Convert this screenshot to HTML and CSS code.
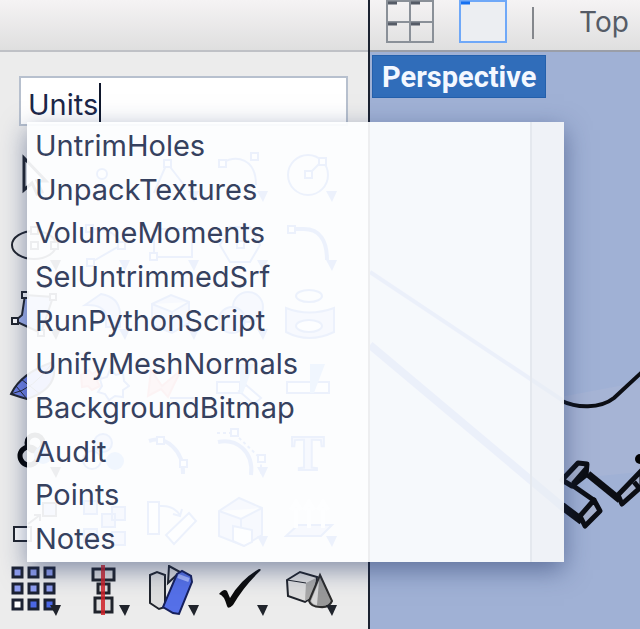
FILE: index.html
```
<!DOCTYPE html>
<html lang="en">
<head>
    <meta charset="UTF-8">
    <title>Perspective</title>
    <link rel="stylesheet" href="styles.css">
</head>
<body>
<div class="app">

<aside class="panel">
    <div class="titlebar"></div>
    <div class="command">
        <input class="command-input" type="text" value="Units" aria-label="Command" autocomplete="off">
        <span class="caret"></span>
        <div class="popup">
            <ul class="suggestions">
                <li><button type="button">UntrimHoles</button></li>
                <li><button type="button">UnpackTextures</button></li>
                <li><button type="button">VolumeMoments</button></li>
                <li><button type="button">SelUntrimmedSrf</button></li>
                <li><button type="button">RunPythonScript</button></li>
                <li><button type="button">UnifyMeshNormals</button></li>
                <li><button type="button">BackgroundBitmap</button></li>
                <li><button type="button">Audit</button></li>
                <li><button type="button">Points</button></li>
                <li><button type="button">Notes</button></li>
            </ul>
            <div class="scroll-track"></div>
        </div>
    </div>

    <div class="tools">
        <!-- select, point, curves -->
        <button type="button" aria-label="Select"><svg viewBox="0 0 53 53"><path class="w heavy" d="M16 7V39L24 32L29 43L34 41L29 30H38Z"/></svg></button>
        <button type="button" aria-label="Point"><svg viewBox="0 0 53 53"><circle class="w" cx="25" cy="23" r="5"/></svg></button>
        <button type="button" aria-label="Polyline"><svg viewBox="0 0 53 53"><path class="l" d="M8 42L21 12L38 34"/><path class="w" d="M18 9h7v7h-7z"/><path class="m" d="M42 40h11l-5 11z"/></svg></button>
        <button type="button" aria-label="Curve"><svg viewBox="0 0 53 53"><path class="l" d="M7 12C22 3 41 8 41 34"/><path class="w" d="M4 9h7v7H4zM36 2h7v7h-7z"/><path class="m" d="M42 40h11l-5 11z"/></svg></button>
        <button type="button" aria-label="Circle"><svg viewBox="0 0 53 53"><circle class="l" cx="24" cy="24" r="20"/><path class="l" d="M25 23L38 10"/><path class="w" d="M21 20h7v7h-7zM35 7h7v7h-7z"/><path class="m" d="M42 40h11l-5 11z"/></svg></button>

        <button type="button" aria-label="Ellipse"><svg viewBox="0 0 53 53"><ellipse class="l" cx="26" cy="25" rx="22" ry="14"/><path class="w" d="M23 22h7v7h-7zM43 22h7v7h-7zM23 7h7v7h-7z"/><path class="m" d="M42 40h11l-5 11z"/></svg></button>
        <button type="button" aria-label="Arc"><svg viewBox="0 0 53 53"><path class="l" d="M12 10C29 6 40 14 44 25L13 43"/><path class="w" d="M9 5h7v7H9zM41 22h7v7h-7zM10 39h7v7h-7z"/><path class="m" d="M42 40h11l-5 11z"/></svg></button>
        <button type="button" aria-label="Rectangle"><svg viewBox="0 0 53 53"><path class="l" d="M8 9H46V37H8z"/><path class="w" d="M4 33h7v7H4z"/><path class="m" d="M42 40h11l-5 11z"/></svg></button>
        <button type="button" aria-label="Polygon"><svg viewBox="0 0 53 53"><path class="l" d="M15 7H35L45 25L35 42H15L5 25Z"/><path class="w" d="M22 21h7v7h-7z"/><path class="m" d="M42 40h11l-5 11z"/></svg></button>
        <button type="button" aria-label="Fillet"><svg viewBox="0 0 53 53"><path class="l thick" d="M9 9H20C36 9 43 21 43 40"/><path class="w" d="M4 6h7v7H4z"/><path class="m" d="M42 40h11l-5 11z"/></svg></button>

        <!-- surfaces and solids -->
        <button type="button" aria-label="Surface"><svg viewBox="0 0 53 53"><path class="b" d="M17 6L45 8L33 44L7 32L14 26Z"/><path class="w" d="M14 3h6v6h-6zM4 29h6v6H4zM42 5h6v6h-6zM30 41h6v6h-6z"/><path class="m" d="M42 40h11l-5 11z"/></svg></button>
        <button type="button" aria-label="Loft"><svg viewBox="0 0 53 53"><path class="b" d="M8 16L24 5Q42 8 43 24V38H29V26Q26 15 8 16Z"/><path class="m" d="M42 40h11l-5 11z"/></svg></button>
        <button type="button" aria-label="Box"><svg viewBox="0 0 53 53"><path class="b" d="M6 15L25 6L43 13V34L26 44L6 36ZM6 15L26 23L43 13M26 23V44"/><path class="m" d="M42 40h11l-5 11z"/></svg></button>
        <button type="button" aria-label="Sphere"><svg viewBox="0 0 53 53"><circle class="b" cx="33" cy="18" r="15"/><circle class="b" cx="17" cy="31" r="13"/><path class="m" d="M42 40h11l-5 11z"/></svg></button>
        <button type="button" aria-label="Extract surface"><svg viewBox="0 0 53 53"><ellipse class="l" cx="25" cy="7" rx="13" ry="6"/><path class="b" d="M2 19Q25 28 50 19V43Q25 55 2 43Z"/><ellipse class="w" cx="25" cy="37" rx="13" ry="6"/></svg></button>

        <!-- mesh, boolean, trim -->
        <button type="button" aria-label="Mesh"><svg viewBox="0 0 53 53"><path class="mesh" d="M3 36Q13 15 45 4Q52 30 19 41Q12 39 3 36Z"/><path class="l thin" d="M3 36Q25 32 45 4M8 28L19 41M13 21L32 36"/></svg></button>
        <button type="button" aria-label="Explode"><svg viewBox="0 0 53 53"><path class="r" d="M4 17l8-5 3 4 6-4 3 7-4 4 3 5-8 4-4-4-6 1z"/><path class="w" d="M23 21l7-2 3-7 6 5 7-2 1 8 5 5-6 4v7l-8-1-6 4-4-6-7-2 4-6z"/></svg></button>
        <button type="button" aria-label="Split"><svg viewBox="0 0 53 53"><path class="r" d="M2 38L5 12L16 28L35 12L22 39L15 31Z"/><path class="l" d="M24 40H48"/></svg></button>
        <button type="button" aria-label="Trim"><svg viewBox="0 0 53 53"><path class="w" d="M2 24H25V35H2zM31 27L46 40L39 46L24 33Z"/><path class="s" d="M25 6H39L28 35H25z"/></svg></button>
        <button type="button" aria-label="Join"><svg viewBox="0 0 53 53"><path class="w" d="M3 24H45V35H3z"/><path class="s" d="M26 6H41L30 35H26z"/></svg></button>

        <!-- group, edit points, text -->
        <button type="button" aria-label="Group"><svg viewBox="0 0 53 53"><circle class="ring" cx="21" cy="29" r="9"/><circle class="ring" cx="27" cy="16" r="8"/><circle class="s" cx="35" cy="28" r="9"/><path class="m" d="M42 40h11l-5 11z"/></svg></button>
        <button type="button" aria-label="Ungroup"><svg viewBox="0 0 53 53"><circle class="b" cx="26" cy="16" r="9"/><circle class="w" cx="15" cy="33" r="9"/><circle class="s" cx="38" cy="34" r="9"/></svg></button>
        <button type="button" aria-label="Edit points"><svg viewBox="0 0 53 53"><path class="l thick" d="M3 14C20 8 38 24 37 47"/><path class="w" d="M11 10h7v7h-7zM34 33h7v7h-7z"/></svg></button>
        <button type="button" aria-label="Control points"><svg viewBox="0 0 53 53"><path class="l thick" d="M3 15C21 11 39 24 36 48"/><path class="l dash" d="M2 6H19L46 32V48"/><path class="w" d="M16 2h7v7h-7zM43 28h7v7h-7z"/><path class="m" d="M42 40h11l-5 11z"/></svg></button>
        <button type="button" aria-label="Text tool"><svg viewBox="0 0 53 53"><text class="letter" x="24" y="43" text-anchor="middle">T</text></svg></button>

        <!-- transforms -->
        <button type="button" aria-label="Scale"><svg viewBox="0 0 53 53"><path class="w" d="M6 31H23V45H6z"/><path class="b" d="M35 7H48V20H35z"/><path class="l" d="M20 28L32 19M26 19H32V25"/></svg></button>
        <button type="button" aria-label="Array"><svg viewBox="0 0 53 53"><path class="b" d="M7 5H20V18H7zM35 11H48V24H35zM25 18H38V31H25zM7 33H20V46H7zM35 36H48V49H35z"/></svg></button>
        <button type="button" aria-label="Rotate"><svg viewBox="0 0 53 53"><path class="w" d="M2 6H13V38H2zM43 17L50 25L28 48L20 39Z"/><path class="l" d="M14 10Q27 9 34 19M27 18L34 20L36 13"/></svg></button>
        <button type="button" aria-label="Edit solid"><svg viewBox="0 0 53 53"><path class="b" d="M4 15L24 2L47 12V39L29 50L4 40ZM4 15L26 23L47 12M26 23V34"/><path class="w" d="M18 30L37 34V46L29 50L18 45Z"/><path class="m" d="M42 40h11l-5 11z"/></svg></button>
        <button type="button" aria-label="Project"><svg viewBox="0 0 53 53"><path class="b" d="M2 40L14 29H48L37 40Z"/><path class="up" d="M12 32V12M25 32V12M39 32V12M7 14L12 6L17 14M20 14L25 6L30 14M34 14L39 6L44 14"/><path class="m" d="M42 40h11l-5 11z"/></svg></button>

        <button type="button" aria-label="Rectangular array"><svg viewBox="0 0 53 53">
            <path class="sq" d="M5 3h9v9H5zM21 3h9v9h-9zM37 3h9v9h-9zM5 19h9v9H5zM21 19h9v9h-9zM37 19h9v9h-9z"/>
            <path class="sq sq-white" d="M5 35h9v9H5z"/><path class="sq sq-blue" d="M21 35h9v9h-9zM37 35h9v9h-9z"/>
            <path class="m" d="M42 40h11l-5 11z"/></svg></button>
        <button type="button" aria-label="Align"><svg viewBox="0 0 53 53"><path class="g heavy" d="M16 4H37V15H16zM21 19H32V28H21zM18 33H35V47H18z"/><path class="axis" d="M26 0V50"/><path class="m" d="M42 40h11l-5 11z"/></svg></button>
        <button type="button" aria-label="Shear"><svg viewBox="0 0 53 53">
            <path class="g" d="M4 10L11 7L19 10V42L13 44L4 38ZM23 1L34 7L22 18Z"/>
            <path class="blue" d="M31 9L36 6L45 11L46 17L33 49L27 48L17 42Z"/><path class="shine" d="M32 11L43 15"/>
            <path class="m" d="M42 40h11l-5 11z"/></svg></button>
        <button type="button" aria-label="Check"><svg viewBox="0 0 53 53"><path class="check" d="M4 29Q9 23 12 26L15 33Q26 14 44 4Q47 4 45 6Q29 21 18 40Q13 45 12 41Q9 30 4 29Z"/><path class="m" d="M42 40h11l-5 11z"/></svg></button>
        <button type="button" aria-label="Solids"><svg viewBox="0 0 53 53">
            <path class="g" d="M3 15L16 7L33 12L30 31L21 37L4 31Z"/><path class="side" d="M22 18L32 13L30 31L21 36Z"/><path class="l thin" d="M3 15L22 18"/>
            <path class="cone" d="M36 10L48 36Q45 43 36 42Q27 42 25 36Z"/><path class="cone-light" d="M35 16L27 36Q29 40 33 40Z"/>
            <path class="m" d="M42 40h11l-5 11z"/></svg></button>
    </div>
</aside>

<main class="workspace">
    <div class="viewbar">
        <button type="button" aria-label="Four views"><svg viewBox="0 0 48 44"><path class="frame" d="M1 1H47V42H1zM24 1V42M1 22H47"/><path class="tab" d="M2 3H11M25 3H34M2 24H11M25 24H34"/></svg></button>
        <button type="button" aria-label="Single view"><svg viewBox="0 0 48 44"><path class="frame on" d="M1 1H47V42H1z"/><path class="tab on" d="M2 3H11"/></svg></button>
        <span class="divider"></span>
        <button type="button" class="view-name">Top</button>
    </div>
    <div class="viewport">
        <svg class="scene" viewBox="0 0 270 577" preserveAspectRatio="xMinYMin slice">
            <path class="haze" d="M190 345L270 330V420L190 428Z"/>
            <path class="curve far" d="M0 220L192 348"/>
            <path class="curve" d="M192 349C206 356 230 357 244 346L272 320"/>
            <path class="edge far" d="M0 293L194 456"/>
            <path class="part open" d="M202 433L225 449"/>
            <path class="edge" d="M192 454L212 469"/>
            <path class="part" d="M208 411L217 412L216 423L202 434L192 428Z"/>
            <path class="part" d="M203 432L216 417"/>
            <path class="part" d="M224 448L230 459L215 474L210 464Z"/>
            <path class="edge bar" d="M218 422L250 448"/>
            <path class="part" d="M248 443L272 418V434L252 452Z"/>
            <path class="part" d="M264 430L269 436"/>
            <circle cx="270" cy="407" r="5"/>
        </svg>
        <button type="button" class="view-label">Perspective</button>
    </div>
</main>

</div>
</body>
</html>
```
FILE: styles.css
```
* {
    box-sizing: border-box;
}

body {
    margin: 0;
    font-family: Inter, "Liberation Sans", sans-serif;
    font-size: 29px;
    color: #36415f;
}

button {
    padding: 0;
    border: none;
    background: none;
    font: inherit;
    color: inherit;
    cursor: pointer;
}

svg {
    display: block;
}

.app {
    display: flex;
    min-height: 100vh;
    overflow: hidden;
}

/* left panel */
.panel {
    flex: none;
    width: 370px;
    background: #ececec;
    border-right: 2px solid #1b2230;
}

.titlebar,
.viewbar {
    height: 52px;
    background: linear-gradient(#f5f3f4, #dfdfdf);
    border-bottom: 2px solid #bfc1c6;
}

.command {
    position: relative;
    margin: 24px 20px 0 19px;
}

.command-input {
    display: block;
    width: 100%;
    height: 50px;
    padding: 6px 7px 0;
    border: 2px solid #b7c0ce;
    border-radius: 0;
    background: #fff;
    font: inherit;
    color: #1c2748;
    outline: none;
}

.caret {
    position: absolute;
    left: 80px;
    top: 7px;
    width: 2px;
    height: 39px;
    background: #10182c;
}

.popup {
    position: absolute;
    z-index: 2;
    left: 8px;
    top: 46px;
    display: flex;
    width: 537px;
    height: 440px;
    background: rgba(253, 254, 255, 0.93);
    box-shadow: 0 8px 24px rgba(30, 50, 100, 0.5);
}

.suggestions {
    flex: 1;
    display: grid;
    grid-auto-rows: 1fr;
    margin: 0;
    padding: 2px 0 1px 8px;
    list-style: none;
}

.suggestions button {
    width: 100%;
    height: 100%;
    text-align: left;
    line-height: 40px;
}

.scroll-track {
    width: 34px;
    border-left: 2px solid #e4e8ee;
    background: rgba(232, 236, 242, 0.5);
}

/* tool icons */
.tools {
    --ink: #20242c;
    display: grid;
    grid-template-columns: repeat(5, 53px);
    gap: 16px;
    padding: 25px 8px 11px;
}

/* tools under the list turn blue */
.tools button:nth-child(-n+30):not(:nth-child(5n+1)) {
    --ink: #1450d0;
}

.tools svg {
    width: 53px;
    height: 53px;
    stroke-width: 2;
}

.w { fill: #fff; stroke: var(--ink); }
.l { fill: none; stroke: var(--ink); }
.b { fill: #a3b4f0; stroke: var(--ink); }
.g { fill: #dedede; stroke: var(--ink); }
.r { fill: #f39a9a; stroke: #e66; }
.s { fill: #4d8bf0; }
.m { fill: var(--ink); }
.thick { stroke-width: 4; }
.heavy { stroke-width: 3; }
.thin { stroke-width: 1; }
.dash { stroke-dasharray: 3 3; }
.mesh { fill: #6f82ea; stroke: var(--ink); }
.ring { fill: none; stroke: #000; stroke-width: 5; }
.up { fill: none; stroke: #fff; stroke-width: 4; }
.letter { font-family: "Liberation Serif", serif; font-weight: bold; font-size: 50px; fill: #a3b4f0; stroke: var(--ink); }
.sq { fill: #8e9df0; stroke: #1c2233; stroke-width: 3; }
.sq-white { fill: #fff; }
.sq-blue { fill: #4c68e6; }
.axis { stroke: #d02128; stroke-width: 4; stroke-opacity: 0.85; }
.blue { fill: #5570e8; stroke: #16205c; }
.shine { stroke: #a3b4ff; stroke-width: 4; }
.check { fill: #0c0c0c; }
.side { fill: #a8a8a8; }
.cone { fill: #999; stroke: #2c2c2c; }
.cone-light { fill: #d8d8d8; }

/* right side */
.workspace {
    flex: 1;
    display: flex;
    flex-direction: column;
    min-width: 0;
}

.viewbar {
    display: flex;
    align-items: flex-start;
    padding-left: 16px;
    border-color: #9a9ea8;
    color: #555b66;
}

.viewbar svg {
    width: 48px;
    height: 44px;
}

.viewbar button + button {
    margin-left: 25px;
}

.frame { fill: none; stroke: #8a9098; stroke-width: 2; }
.frame.on { fill: #eceef2; stroke: #6fa8f8; }
.tab { stroke: #555b66; stroke-width: 3; }
.tab.on { stroke: #1670f0; }

.divider {
    width: 2px;
    height: 32px;
    margin: 7px 45px 0 25px;
    background: #84878c;
}

.view-name {
    font-size: 28px;
    line-height: 44px;
}

.viewport {
    position: relative;
    flex: 1;
    padding: 3px 2px;
    background: #a0b1d5;
}

.scene {
    position: absolute;
    inset: 0;
    width: 100%;
    height: 100%;
}

.haze { fill: #aab6d6; opacity: 0.6; }
.curve { fill: none; stroke: #0c0e14; stroke-width: 4; }
.edge { fill: none; stroke: #0c0e14; stroke-width: 8; }
.bar { stroke-width: 7; }
.part { fill: #a6b1cd; stroke: #0c0e14; stroke-width: 5; stroke-linejoin: round; }
.open { fill: none; }
.far { stroke: #0c40b8; }

.view-label {
    position: relative;
    height: 43px;
    padding: 0 9px;
    border: 1px solid #2460ac;
    background: #306dba;
    font-family: Roboto, "Liberation Sans", sans-serif;
    font-weight: bold;
    color: #f4f8ff;
}
```
